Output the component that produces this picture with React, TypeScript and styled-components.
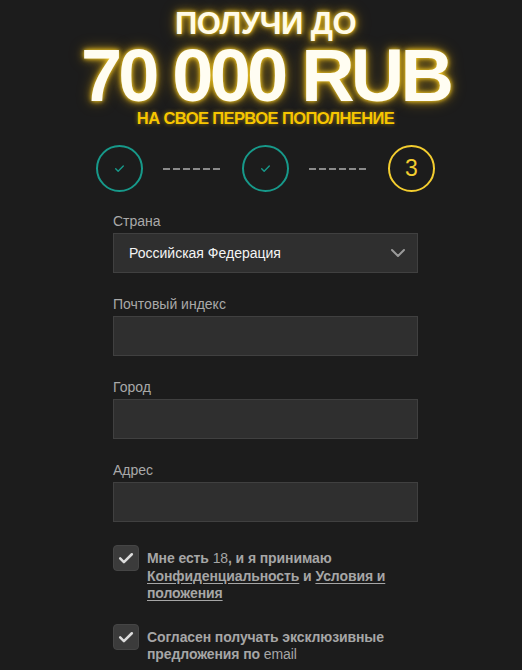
import React from "react";
import styled, { createGlobalStyle } from "styled-components";

const Global = createGlobalStyle`
  html, body { margin: 0; padding: 0; background: #1c1c1c; }
  body { font-family: "Liberation Sans", Arial, sans-serif; }
`;

const Page = styled.div`
  width: 522px;
  min-height: 670px;
  background: #1c1c1c;
  display: flex;
  flex-direction: column;
  align-items: center;
  padding-left: 9px;
  box-sizing: border-box;
  overflow: hidden;
`;

const glow = `0 0 4px rgba(255, 214, 40, 0.95), 0 0 9px rgba(245, 190, 20, 0.75), 0 0 16px rgba(245, 190, 20, 0.35)`;

const Hero = styled.div`
  display: flex;
  flex-direction: column;
  align-items: center;
  padding-top: 7px;
`;

const SmallTitle = styled.div`
  color: #fffbe8;
  font-weight: 700;
  font-size: 31px;
  line-height: 34px;
  letter-spacing: -0.5px;
  text-shadow: ${glow};
`;

const BigTitle = styled.div`
  color: #fffdf2;
  font-weight: 700;
  font-size: 74px;
  line-height: 70px;
  letter-spacing: -3.8px;
  text-shadow: ${glow};
`;

const SubTitle = styled.div`
  color: #f7c600;
  font-weight: 700;
  font-size: 16.5px;
  line-height: 20px;
  letter-spacing: -0.6px;
  margin-top: -3px;
  text-shadow: 0 0 4px rgba(245, 190, 20, 0.55);
`;

const Steps = styled.div`
  display: flex;
  align-items: center;
  gap: 20px;
  margin-top: 17px;
`;

const Circle = styled.div<{ $active?: boolean }>`
  width: 47px;
  height: 47px;
  box-sizing: border-box;
  border-radius: 50%;
  border: 2px solid ${(p) => (p.$active ? "#f3cd2f" : "#17998a")};
  display: flex;
  align-items: center;
  justify-content: center;
  color: #f3cd2f;
  font-size: 23px;
  font-family: "Liberation Sans", Arial, sans-serif;
`;

const Dash = styled.div`
  width: 59px;
  height: 2px;
  background: repeating-linear-gradient(
    to right,
    #8a8a8a 0 7px,
    transparent 7px 10px
  );
`;

const Form = styled.div`
  width: 305px;
  display: flex;
  flex-direction: column;
  margin-top: 21px;
`;

const Field = styled.div`
  display: flex;
  flex-direction: column;
  gap: 3px;
  margin-bottom: 23px;
`;

const Label = styled.div`
  color: #a9a9a9;
  font-size: 14px;
  line-height: 17px;
`;

const Box = styled.div`
  height: 40px;
  box-sizing: border-box;
  background: #2f2f2f;
  border: 1px solid #404040;
  display: flex;
  align-items: center;
  justify-content: space-between;
  padding: 0 11px 0 15px;
`;

const SelectText = styled.span`
  color: #f4f4f4;
  font-size: 14px;
`;

const Checks = styled.div`
  display: flex;
  flex-direction: column;
  gap: 21px;
`;

const CheckRow = styled.div`
  display: flex;
  align-items: flex-start;
  gap: 8px;
`;

const CheckBox = styled.div`
  width: 26px;
  height: 26px;
  flex: none;
  border-radius: 4px;
  background: #3b3b3b;
  border: 1px solid #454545;
  box-sizing: border-box;
  display: flex;
  align-items: center;
  justify-content: center;
`;

const CheckText = styled.div`
  color: #a6a6a6;
  font-weight: 700;
  font-size: 14px;
  line-height: 17.5px;
  padding-top: 5px;
  letter-spacing: -0.1px;
`;

const Light = styled.span`
  font-weight: 400;
`;

const Link = styled.a`
  color: #a6a6a6;
  text-decoration: underline;
  text-underline-offset: 2px;
`;

const Tick = ({ color, size, weight }: { color: string; size: number; weight: number }) => (
  <svg width={size} height={size} viewBox="0 0 24 24" fill="none">
    <path d="M5 12.5l4.5 4.5L19 7.5" stroke={color} strokeWidth={weight} strokeLinecap="round" strokeLinejoin="round" />
  </svg>
);

export default function App() {
  return (
    <>
      <Global />
      <Page>
        <Hero>
          <SmallTitle>ПОЛУЧИ ДО</SmallTitle>
          <BigTitle>70 000 RUB</BigTitle>
          <SubTitle>НА СВОЕ ПЕРВОЕ ПОПОЛНЕНИЕ</SubTitle>
        </Hero>
        <Steps>
          <Circle>
            <Tick color="#17998a" size={13} weight={2.6} />
          </Circle>
          <Dash />
          <Circle>
            <Tick color="#17998a" size={13} weight={2.6} />
          </Circle>
          <Dash />
          <Circle $active>3</Circle>
        </Steps>
        <Form>
          <Field>
            <Label>Страна</Label>
            <Box>
              <SelectText>Российская Федерация</SelectText>
              <svg width="16" height="10" viewBox="0 0 16 10" fill="none">
                <path d="M2 2l6 6 6-6" stroke="#9a9a9a" strokeWidth="2" strokeLinecap="round" strokeLinejoin="round" />
              </svg>
            </Box>
          </Field>
          <Field>
            <Label>Почтовый индекс</Label>
            <Box />
          </Field>
          <Field>
            <Label>Город</Label>
            <Box />
          </Field>
          <Field>
            <Label>Адрес</Label>
            <Box />
          </Field>
          <Checks>
            <CheckRow>
              <CheckBox>
                <Tick color="#dcdcdc" size={20} weight={3} />
              </CheckBox>
              <CheckText>
                Мне есть <Light>18</Light>, и я принимаю
                <br />
                <Link>Конфиденциальность</Link> и <Link>Условия и положения</Link>
              </CheckText>
            </CheckRow>
            <CheckRow>
              <CheckBox>
                <Tick color="#dcdcdc" size={20} weight={3} />
              </CheckBox>
              <CheckText>
                Согласен получать эксклюзивные
                <br />
                предложения по <Light>email</Light>
              </CheckText>
            </CheckRow>
          </Checks>
        </Form>
      </Page>
    </>
  );
}
